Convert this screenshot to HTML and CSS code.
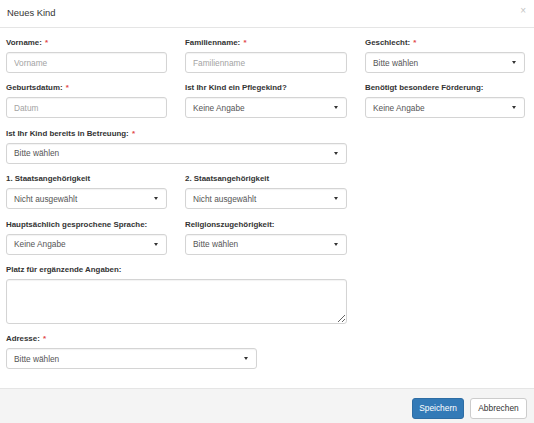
FILE: index.html
```html
<!DOCTYPE html>
<html lang="de">
<head>
<meta charset="utf-8">
<title>Neues Kind</title>
<link rel="stylesheet" href="styles.css">
</head>
<body>
<div class="modal">
  <div class="modal-header">
    <h4 class="modal-title">Neues Kind</h4>
    <span class="close">×</span>
  </div>
  <div class="modal-body">
    <div class="form-grid">
      <div class="group">
        <label class="lbl">Vorname: <span class="req">*</span></label>
        <input class="ctrl" type="text" placeholder="Vorname">
      </div>
      <div class="group">
        <label class="lbl">Familienname: <span class="req">*</span></label>
        <input class="ctrl" type="text" placeholder="Familienname">
      </div>
      <div class="group">
        <label class="lbl">Geschlecht: <span class="req">*</span></label>
        <div class="sel"><select class="ctrl"><option>Bitte wählen</option></select></div>
      </div>

      <div class="group">
        <label class="lbl">Geburtsdatum: <span class="req">*</span></label>
        <input class="ctrl" type="text" placeholder="Datum">
      </div>
      <div class="group">
        <label class="lbl">Ist Ihr Kind ein Pflegekind?</label>
        <div class="sel"><select class="ctrl"><option>Keine Angabe</option></select></div>
      </div>
      <div class="group">
        <label class="lbl">Benötigt besondere Förderung:</label>
        <div class="sel"><select class="ctrl"><option>Keine Angabe</option></select></div>
      </div>

      <div class="group span2">
        <label class="lbl">Ist Ihr Kind bereits in Betreuung: <span class="req">*</span></label>
        <div class="sel"><select class="ctrl"><option>Bitte wählen</option></select></div>
      </div>

      <div class="group col1">
        <label class="lbl">1. Staatsangehörigkeit</label>
        <div class="sel"><select class="ctrl"><option>Nicht ausgewählt</option></select></div>
      </div>
      <div class="group">
        <label class="lbl">2. Staatsangehörigkeit</label>
        <div class="sel"><select class="ctrl"><option>Nicht ausgewählt</option></select></div>
      </div>

      <div class="group col1">
        <label class="lbl">Hauptsächlich gesprochene Sprache:</label>
        <div class="sel"><select class="ctrl"><option>Keine Angabe</option></select></div>
      </div>
      <div class="group">
        <label class="lbl">Religionszugehörigkeit:</label>
        <div class="sel"><select class="ctrl"><option>Bitte wählen</option></select></div>
      </div>

      <div class="group span2">
        <label class="lbl">Platz für ergänzende Angaben:</label>
        <textarea class="ctrl area"></textarea>
      </div>

      <div class="group span3">
        <label class="lbl">Adresse: <span class="req">*</span></label>
        <div class="sel addr"><select class="ctrl"><option>Bitte wählen</option></select></div>
      </div>
    </div>
  </div>
  <div class="modal-footer">
    <button class="btn btn-primary" type="button">Speichern</button>
    <button class="btn btn-default" type="button">Abbrechen</button>
  </div>
</div>
</body>
</html>
```

FILE: styles.css
```css
* { box-sizing: border-box; }
html, body { margin: 0; padding: 0; background: #fff; }
body { font-family: "Liberation Sans", Arial, sans-serif; color: #333; }

.modal { width: 534px; height: 423px; display: flex; flex-direction: column; background: #fff; }

.modal-header {
  height: 28px;
  flex: none;
  border-bottom: 1px solid #e5e5e5;
  display: flex;
  align-items: center;
  justify-content: space-between;
  padding: 0 8px 3px 7px;
}
.modal-title { margin: 0; font-size: 9.4px; font-weight: normal; line-height: 11px; color: #333; }
.close { font-size: 10px; color: #c4c4c4; line-height: 10px; margin-top: -3px; }

.modal-body { flex: 1; padding: 10px 9px 0 6px; }

.form-grid {
  display: grid;
  grid-template-columns: 161px 162px 160px;
  column-gap: 18px;
}
.group { display: flex; flex-direction: column; margin-bottom: 10.4px; min-width: 0; }
.span2 { grid-column: 1 / span 2; }
.span3 { grid-column: 1 / span 3; }
.col1 { grid-column: 1; }

.lbl {
  font-size: 7.9px;
  font-weight: bold;
  line-height: 10px;
  height: 10px;
  margin-bottom: 4px;
  white-space: nowrap;
  color: #333;
}
.req { color: #e24a4a; font-weight: bold; margin-left: 1px; }

.ctrl {
  display: block;
  width: 100%;
  height: 21px;
  margin: 0;
  padding: 0 7px;
  font-family: "Liberation Sans", Arial, sans-serif;
  font-size: 8.3px;
  color: #555;
  background: #fff;
  border: 1px solid #d4d4d4;
  border-radius: 3px;
  box-shadow: inset 0 1px 1px rgba(0,0,0,0.05);
  outline: none;
}
.ctrl::placeholder { color: #a3a3a3; }
select.ctrl { -webkit-appearance: none; appearance: none; }

.sel { position: relative; }
.sel::after {
  content: "";
  position: absolute;
  right: 9px;
  top: 9px;
  border-left: 2.5px solid transparent;
  border-right: 2.5px solid transparent;
  border-top: 3px solid #333;
}
.addr { width: 251px; }

.area { height: 45px; resize: vertical; padding: 4px 7px; }

.modal-footer {
  height: 35px;
  flex: none;
  background: #f4f4f4;
  border-top: 1px solid #e5e5e5;
  display: flex;
  justify-content: flex-end;
  align-items: flex-start;
  gap: 6px;
  padding: 9px 7px 0 0;
}
.btn {
  height: 21px;
  margin: 0;
  font-family: "Liberation Sans", Arial, sans-serif;
  font-size: 8.4px;
  line-height: 19px;
  border-radius: 3px;
  border: 1px solid #ccc;
  padding: 0;
  cursor: pointer;
}
.btn-primary { width: 52px; background: #337ab7; border-color: #2e6da4; color: #fff; }
.btn-default { width: 57px; background: #fff; color: #333; }
```
